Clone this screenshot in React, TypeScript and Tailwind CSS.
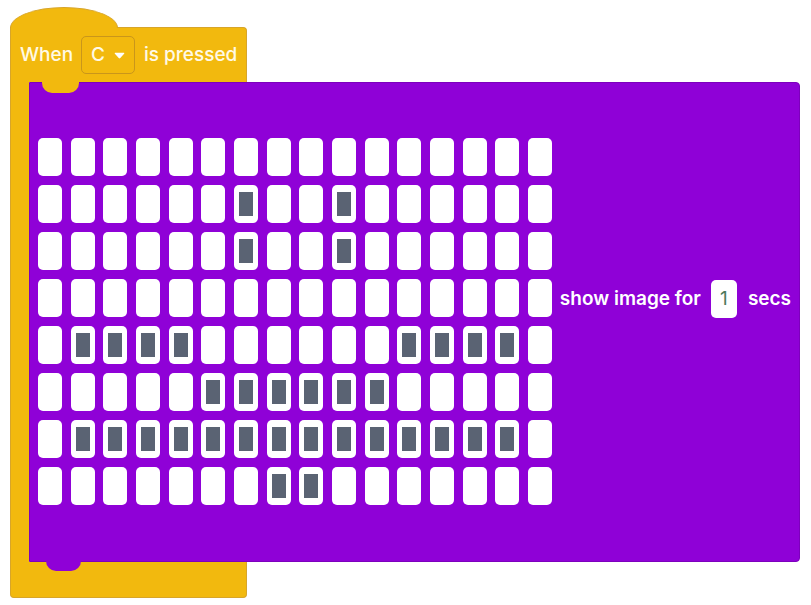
import React from "react";

const filled: number[][] = [
  [],
  [6, 9],
  [6, 9],
  [],
  [1, 2, 3, 4, 11, 12, 13, 14],
  [5, 6, 7, 8, 9, 10],
  [1, 2, 3, 4, 5, 6, 7, 8, 9, 10, 11, 12, 13, 14],
  [7, 8],
];

export default function App() {
  const cells: React.ReactNode[] = [];
  for (let r = 0; r < 8; r++) {
    for (let c = 0; c < 16; c++) {
      const on = filled[r].includes(c);
      cells.push(
        <div
          key={`${r}-${c}`}
          className="w-[24px] h-[38px] bg-white rounded-[5px] flex items-center justify-center"
        >
          {on && <div className="w-[14px] h-[24px] bg-[#5a6373]" />}
        </div>
      );
    }
  }

  return (
    <div
      className="w-[811px] h-[605px] bg-white pt-[7px] pl-[10px]"
      style={{ fontFamily: "Inter, 'Noto Sans', sans-serif" }}
    >
      {/* hat dome */}
      <div className="relative z-10 -mb-px w-[108px] h-[21px] bg-[#f2b90e] border-t border-l border-r border-[#d7a52a] [border-radius:54px_54px_0_0/21px_21px_0_0]" />
      {/* hat row */}
      <div className="w-[237px] h-[55px] bg-[#f2b90e] border-t border-l border-r border-[#d7a52a] rounded-tr-[4px] flex items-center pl-[9px] gap-[9px] text-[19px] font-medium text-[#fff9e6] whitespace-nowrap">
        <span>When</span>
        <div className="-ml-[1px] h-[38px] px-[9px] flex items-center gap-[9px] border border-[#c9961b] rounded-[5px]">
          <span>C</span>
          <svg width="11" height="7" viewBox="0 0 11 7">
            <path d="M1.2 0.8 H9.8 Q10.8 0.8 10.1 1.7 L6.3 6 Q5.5 6.8 4.7 6 L0.9 1.7 Q0.2 0.8 1.2 0.8 Z" fill="#ffffff" />
          </svg>
        </div>
        <span>is pressed</span>
      </div>
      {/* body */}
      <div className="flex">
        <div className="w-[19px] bg-[#f2b90e] border-l border-[#d7a52a]" />
        <div className="relative w-[771px] h-[480px] bg-[#8f01d7] border border-[#7d00bd] rounded-[4px] rounded-tl-none rounded-bl-none flex items-start pl-[8px] pt-[55px]">
          {/* notch from hat */}
          <div className="absolute -top-px left-[12px] w-[37px] h-[11px] bg-[#f2b90e] rounded-b-[10px]" />
          {/* bottom tab */}
          <div className="absolute -bottom-[10px] left-[16px] w-[35px] h-[10px] bg-[#8f01d7] rounded-b-[10px]" />
          <div className="grid grid-cols-[repeat(16,24px)] gap-x-[8.67px] gap-y-[9px]">
            {cells}
          </div>
          <div className="ml-[8px] mt-[142px] h-[38px] flex items-center text-[19px] font-semibold text-white whitespace-nowrap">
            <span>show image for</span>
            <div className="ml-[10px] w-[26px] h-[38px] bg-white rounded-[5px] flex items-center justify-center text-[19px] font-normal text-[#4e7a5c]">
              1
            </div>
            <span className="ml-[11px]">secs</span>
          </div>
        </div>
      </div>
      {/* bottom bar */}
      <div className="w-[237px] h-[36px] bg-[#f2b90e] border-l border-r border-b border-[#d7a52a] rounded-b-[4px]" />
    </div>
  );
}
